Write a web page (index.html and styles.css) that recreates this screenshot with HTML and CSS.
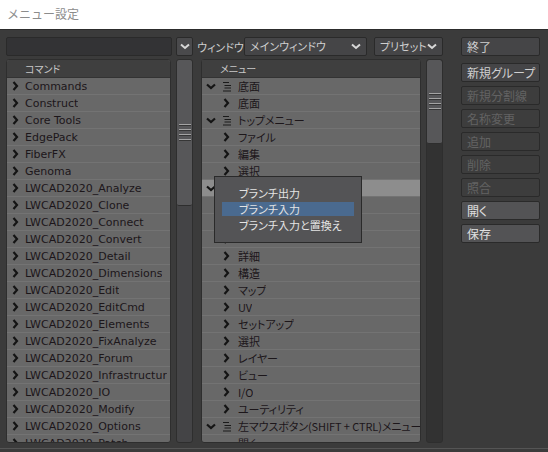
FILE: index.html
```html
<!DOCTYPE html>
<html>
<head>
  <meta charset="utf-8">
  <title>メニュー設定</title>
  <link rel="stylesheet" href="styles.css">
</head>
<body>
  <div class="titlebar">メニュー設定</div>
  <div class="window">
    <div class="topbar">
      <div class="search"></div>
      <div class="dropbtn"><svg width="10" height="7" viewBox="0 0 10 7"><polyline points="1,1.5 5,5 9,1.5" fill="none" stroke="#d8d8d8" stroke-width="2"/></svg></div>
      <span class="label">ウィンドウ</span>
      <div class="combo combo-window">メインウィンドウ<svg width="10" height="7" viewBox="0 0 10 7"><polyline points="1,1.5 5,5 9,1.5" fill="none" stroke="#d8d8d8" stroke-width="2"/></svg></div>
      <div class="combo combo-preset">プリセット<svg width="10" height="7" viewBox="0 0 10 7"><polyline points="1,1.5 5,5 9,1.5" fill="none" stroke="#d8d8d8" stroke-width="2"/></svg></div>
      <button class="btn quit">終了</button>
    </div>

    <div class="content">
      <div class="panel panel-left">
        <div class="head">コマンド</div>
        <ul class="rows" id="commands"></ul>
      </div>
      <div class="scroll scroll-left"><div class="thumb"><span class="grip"></span></div></div>

      <div class="panel panel-mid">
        <div class="head">メニュー</div>
        <ul class="rows" id="menus"></ul>
        <div class="popup">
          <div class="pop-item">ブランチ出力</div>
          <div class="pop-item active">ブランチ入力</div>
          <div class="pop-item">ブランチ入力と置換え</div>
        </div>
      </div>
      <div class="scroll scroll-right"><div class="thumb"><span class="grip"></span></div></div>

      <div class="buttons">
        <button class="btn">新規グループ</button>
        <button class="btn off">新規分割線</button>
        <button class="btn off">名称変更</button>
        <button class="btn off">追加</button>
        <button class="btn off">削除</button>
        <button class="btn off">照合</button>
        <button class="btn on">開く</button>
        <button class="btn on">保存</button>
      </div>
    </div>
    <div class="bottomline"></div>
  </div>

  <script>
    const right = '<svg class="chev" width="7" height="10" viewBox="0 0 7 10"><polyline points="1.5,1 5,5 1.5,9" fill="none" stroke="#141414" stroke-width="2.2"/></svg>';
    const down = '<svg class="chev" width="10" height="7" viewBox="0 0 10 7"><polyline points="1,1.5 5,5 9,1.5" fill="none" stroke="#141414" stroke-width="2.2"/></svg>';
    const lines = '<svg class="lines" width="8" height="11" viewBox="0 0 8 11"><path d="M0 1.5h6M1.5 4.5h6.5M1.5 7h6.5M0 10h8" stroke="#1a1a1a" stroke-width="1.2"/></svg>';

    const commands = ['Commands', 'Construct', 'Core Tools', 'EdgePack', 'FiberFX', 'Genoma',
      'LWCAD2020_Analyze', 'LWCAD2020_Clone', 'LWCAD2020_Connect', 'LWCAD2020_Convert',
      'LWCAD2020_Detail', 'LWCAD2020_Dimensions', 'LWCAD2020_Edit', 'LWCAD2020_EditCmd',
      'LWCAD2020_Elements', 'LWCAD2020_FixAnalyze', 'LWCAD2020_Forum', 'LWCAD2020_Infrastructur',
      'LWCAD2020_IO', 'LWCAD2020_Modify', 'LWCAD2020_Options', 'LWCAD2020_Patch'];

    const list = document.getElementById('commands');
    commands.forEach(name => {
      const li = document.createElement('li');
      li.className = 'row';
      li.innerHTML = '<span class="c1">' + right + '</span><span class="txt">' + name + '</span>';
      list.appendChild(li);
    });

    // g = group (open), s = selected group, c = child, b = bullet
    const menus = [
      ['g', '底面'], ['c', '底面'], ['g', 'トップメニュー'], ['c', 'ファイル'], ['c', '編集'],
      ['c', '選択'], ['s', ''], ['c', ''], ['c', ''], ['c', ''], ['c', '詳細'], ['c', '構造'],
      ['c', 'マップ'], ['c', 'UV'], ['c', 'セットアップ'], ['c', '選択'], ['c', 'レイヤー'],
      ['c', 'ビュー'], ['c', 'I/O'], ['c', 'ユーティリティ'],
      ['g', '左マウスボタン(SHIFT + CTRL)メニュー'], ['b', '開く']
    ];

    const mlist = document.getElementById('menus');
    menus.forEach(([kind, name]) => {
      const li = document.createElement('li');
      li.className = 'row';
      if (kind === 'g' || kind === 's') {
        li.innerHTML = '<span class="c1">' + down + '</span><span class="c2">' + (kind === 'g' ? lines : '') + '</span><span class="txt">' + name + '</span>';
        if (kind === 's') li.classList.add('selected');
      } else if (kind === 'b') {
        li.innerHTML = '<span class="c1"></span><span class="c2"><span class="dot"></span></span><span class="txt">' + name + '</span>';
      } else {
        li.innerHTML = '<span class="c1"></span><span class="c2">' + right + '</span><span class="txt">' + name + '</span>';
      }
      mlist.appendChild(li);
    });
  </script>
</body>
</html>
```

FILE: styles.css
```css
body {
  margin: 0;
  width: 548px;
  height: 452px;
  overflow: hidden;
  background-color: #3b3b3b;
  font-family: "DejaVu Sans", "Noto Sans CJK JP", sans-serif;
}

.titlebar {
  height: 30px;
  box-sizing: border-box;
  padding: 6px 0 0 7px;
  background-color: #fff;
  color: #8c8c8c;
  font-family: "Noto Sans CJK JP", sans-serif;
  font-size: 12px;
  line-height: 16px;
  border-bottom: 1px solid #2c2c2c;
}

.window {
  height: 422px;
  position: relative;
  padding: 7px 0 0 6px;
  box-sizing: border-box;
}

.topbar {
  display: flex;
  align-items: center;
  height: 19px;
  font-family: "Noto Sans CJK JP", sans-serif;
  font-feature-settings: "palt";
  font-size: 11px;
  color: #cfcfcf;
}

.search {
  width: 166px;
  height: 19px;
  box-sizing: border-box;
  background-color: #333335;
  border: 1px solid #2a2a2a;
  border-radius: 2px;
}

.dropbtn {
  width: 17px;
  height: 19px;
  margin-left: 4px;
  box-sizing: border-box;
  background-color: #4a4a4c;
  border: 1px solid #2a2a2a;
  border-radius: 2px;
  display: flex;
  align-items: center;
  justify-content: center;
}

.label {
  width: 47px;
  margin-left: 4px;
}

.combo {
  height: 19px;
  box-sizing: border-box;
  background-color: #454547;
  border: 1px solid #2a2a2a;
  border-radius: 2px;
  display: flex;
  align-items: center;
  justify-content: space-between;
  padding: 0 5px;
  line-height: 17px;
}

.combo-window { width: 123px; }

.combo-preset {
  width: 69px;
  margin-left: 7px;
}

.btn {
  display: block;
  width: 79px;
  height: 19px;
  box-sizing: border-box;
  padding: 0 0 0 5px;
  background-color: #454547;
  border: 1px solid #2a2a2a;
  border-radius: 2px;
  color: #cfcfcf;
  text-align: left;
  font-family: "Noto Sans CJK JP", sans-serif;
  font-feature-settings: "palt";
  font-size: 12px;
  line-height: 17px;
}

.quit { margin-left: 18px; }

.btn.off {
  background-color: #3d3d3d;
  color: #636363;
}

.btn.on {
  background-color: #535355;
  color: #e0e0e0;
}

.content {
  display: flex;
  margin-top: 3px;
  height: 384px;
}

.panel {
  position: relative;
  height: 384px;
  box-sizing: border-box;
  border: 1px solid #2e2e2e;
  border-radius: 3px;
  background-color: #686868;
  overflow: hidden;
}

.panel-left { width: 165px; }

.panel-mid {
  width: 220px;
  margin-left: 8px;
  overflow: visible;
}

.head {
  height: 18px;
  padding-left: 18px;
  background-color: #3f3f3f;
  color: #c8c8c8;
  font-family: "Noto Sans CJK JP", sans-serif;
  font-feature-settings: "palt";
  font-size: 10px;
  line-height: 17px;
  border-bottom: 1px solid #333;
  box-sizing: border-box;
}

.rows {
  list-style: none;
  margin: 0;
  padding: 0;
  height: 364px;
  overflow: hidden;
}

.row {
  height: 17px;
  box-sizing: border-box;
  border-bottom: 1px solid #737373;
  display: flex;
  align-items: center;
  white-space: nowrap;
  color: #1c161a;
  font-size: 11px;
}

.panel-mid .row {
  font-family: "Noto Sans CJK JP", sans-serif;
  font-feature-settings: "palt";
  font-size: 11px;
  letter-spacing: -0.1px;
}

.row.selected { background-color: #8d8d8d; }

.c1 {
  width: 17px;
  flex: none;
  display: flex;
  justify-content: center;
  padding-left: 1px;
  box-sizing: border-box;
}

.panel-left .c1 {
  width: 18px;
  justify-content: flex-start;
  padding-left: 5px;
}

.c2 {
  width: 19px;
  flex: none;
  display: flex;
  justify-content: flex-start;
  padding-left: 4px;
  box-sizing: border-box;
}

.txt {
  min-width: 0;
  overflow: hidden;
}

.dot {
  width: 5px;
  height: 5px;
  border-radius: 50%;
  background-color: #141414;
  margin-top: 6px;
}

.scroll {
  width: 17px;
  height: 384px;
  margin-left: 5px;
  box-sizing: border-box;
  border: 1px solid #2e2e2e;
  border-radius: 3px;
  background-color: #444446;
  overflow: hidden;
}

.scroll-right { background-color: #323232; }

.thumb {
  height: 146px;
  background-color: #575759;
  border-bottom: 1px solid #2e2e2e;
  border-radius: 2px;
  display: flex;
  align-items: center;
  justify-content: center;
  box-sizing: border-box;
}

.scroll-right .thumb { height: 84px; }

.grip {
  width: 12px;
  height: 17px;
  background: repeating-linear-gradient(#a4a4a4 0, #a4a4a4 1px, #363636 1px, #363636 2px, transparent 2px, transparent 5px);
}

.buttons {
  margin-left: 18px;
  display: flex;
  flex-direction: column;
  gap: 4px;
  padding-top: 4px;
}

.popup {
  position: absolute;
  left: 12px;
  top: 116px;
  width: 148px;
  height: 67px;
  box-sizing: border-box;
  background-color: #545456;
  border: 1px solid #2a2a2a;
  padding: 9px 7px 0 7px;
  font-family: "Noto Sans CJK JP", sans-serif;
  font-feature-settings: "palt";
  font-size: 11px;
  color: #e4e4e4;
}

.pop-item {
  height: 14px;
  line-height: 14px;
  padding-left: 17px;
  margin-bottom: 2px;
}

.pop-item.active { background-color: #4a6a8f; }

.bottomline {
  position: absolute;
  left: 0;
  right: 0;
  bottom: 3px;
  height: 1px;
  background-color: #555;
}
```
